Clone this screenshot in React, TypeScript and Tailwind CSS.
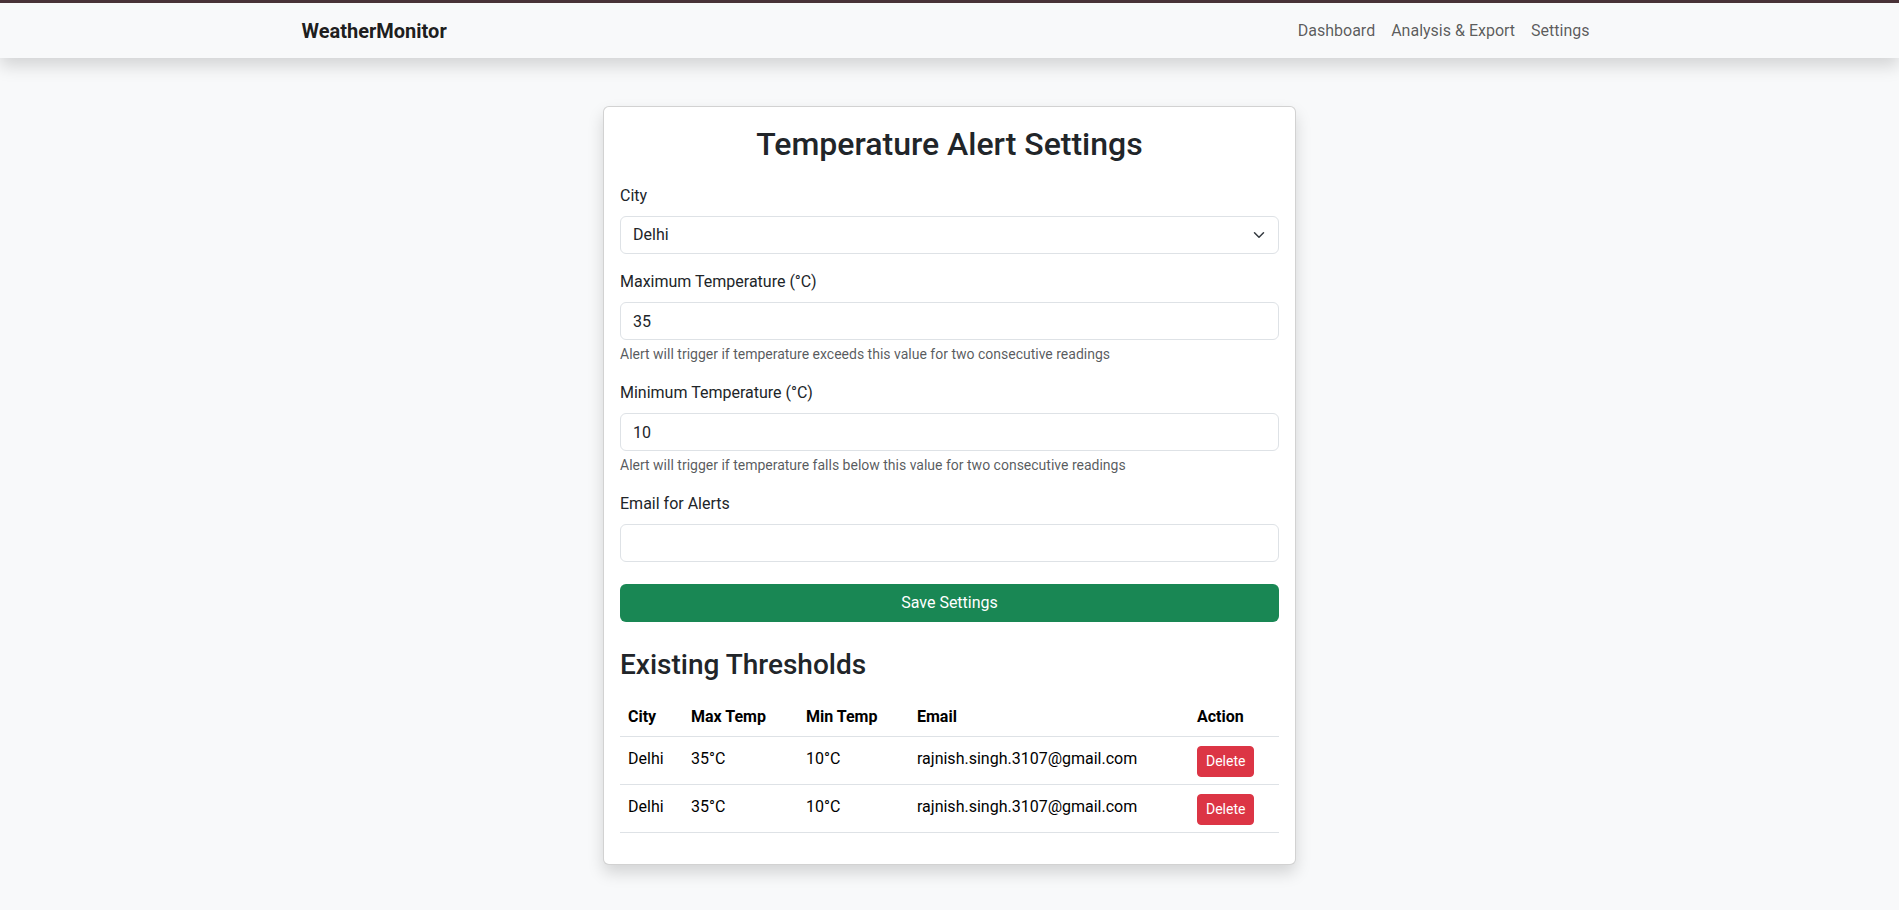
import { useState } from "react";

interface Threshold {
  id: number;
  city: string;
  maxTemp: number;
  minTemp: number;
  email: string;
}

const initialThresholds: Threshold[] = [
  { id: 1, city: "Delhi", maxTemp: 35, minTemp: 10, email: "rajnish.singh.3107@gmail.com" },
  { id: 2, city: "Delhi", maxTemp: 35, minTemp: 10, email: "rajnish.singh.3107@gmail.com" },
];

const cities = ["Delhi", "Mumbai", "Chennai", "Bangalore", "Kolkata", "Hyderabad"];

const App = () => {
  const [city, setCity] = useState("Delhi");
  const [maxTemp, setMaxTemp] = useState("35");
  const [minTemp, setMinTemp] = useState("10");
  const [email, setEmail] = useState("");
  const [thresholds, setThresholds] = useState<Threshold[]>(initialThresholds);

  const handleDelete = (id: number) => {
    setThresholds(thresholds.filter((t) => t.id !== id));
  };

  return (
    <div className="min-h-screen bg-[#f8f9fa] text-[#212529] font-['Segoe_UI',Roboto,'Liberation_Sans',sans-serif]">
      <div className="h-[3px] bg-[#4a3339]" />

      <nav className="bg-[#f8f9fa] shadow-[0_8px_16px_rgba(0,0,0,0.15)] relative">
        <div className="w-[1320px] mx-auto px-3 h-[55px] flex items-center justify-between">
          <span className="text-xl font-bold text-black/90">WeatherMonitor</span>
          <div className="flex items-center">
            <a className="px-2 text-base text-black/65">Dashboard</a>
            <a className="px-2 text-base text-black/65">Analysis &amp; Export</a>
            <a className="px-2 text-base text-black/65">Settings</a>
          </div>
        </div>
      </nav>

      <main className="pt-12 pb-10">
        <div className="w-[693px] mx-auto bg-white border border-black/[0.175] rounded-md shadow-[0_8px_16px_rgba(0,0,0,0.15)] px-4 pt-[18px] pb-[15px]">
          <h2 className="text-[32px] font-medium leading-[1.2] text-center mb-[21px]">
            Temperature Alert Settings
          </h2>

          <div className="mb-4">
            <label className="block text-base leading-6 mb-2">City</label>
            <div className="relative">
              <select
                value={city}
                onChange={(e) => setCity(e.target.value)}
                className="appearance-none w-full h-[38px] border border-[#dee2e6] rounded-md bg-white pl-3 pr-9 text-base outline-none"
              >
                {cities.map((c) => (
                  <option key={c}>{c}</option>
                ))}
              </select>
              <svg
                className="absolute right-3 top-[13px] pointer-events-none"
                width="16"
                height="12"
                viewBox="0 0 16 16"
                fill="none"
                stroke="#343a40"
                strokeWidth="2"
                strokeLinecap="round"
                strokeLinejoin="round"
              >
                <path d="m2 5 6 6 6-6" />
              </svg>
            </div>
          </div>

          <div className="mb-4">
            <label className="block text-base leading-6 mb-2">Maximum Temperature (°C)</label>
            <input
              type="number"
              value={maxTemp}
              onChange={(e) => setMaxTemp(e.target.value)}
              className="w-full h-[38px] border border-[#dee2e6] rounded-md px-3 text-base outline-none"
            />
            <p className="mt-1 text-sm leading-[1.5] text-[#212529]/75">
              Alert will trigger if temperature exceeds this value for two consecutive readings
            </p>
          </div>

          <div className="mb-4">
            <label className="block text-base leading-6 mb-2">Minimum Temperature (°C)</label>
            <input
              type="number"
              value={minTemp}
              onChange={(e) => setMinTemp(e.target.value)}
              className="w-full h-[38px] border border-[#dee2e6] rounded-md px-3 text-base outline-none"
            />
            <p className="mt-1 text-sm leading-[1.5] text-[#212529]/75">
              Alert will trigger if temperature falls below this value for two consecutive readings
            </p>
          </div>

          <div className="mb-[22px]">
            <label className="block text-base leading-6 mb-2">Email for Alerts</label>
            <input
              type="email"
              value={email}
              onChange={(e) => setEmail(e.target.value)}
              className="w-full h-[38px] border border-[#dee2e6] rounded-md px-3 text-base outline-none"
            />
          </div>

          <button className="w-full h-[38px] bg-[#198754] text-white text-base rounded-md">
            Save Settings
          </button>

          <h3 className="text-[28px] font-medium leading-[1.2] mt-[26px] mb-[14px]">Existing Thresholds</h3>

          <table className="w-full table-fixed text-black mb-4">
            <thead>
              <tr className="border-b border-[#dee2e6]">
                <th className="w-[63px] text-left font-bold px-2 pt-[9px] pb-[7px] leading-6">City</th>
                <th className="w-[115px] text-left font-bold px-2 pt-[9px] pb-[7px] leading-6">Max Temp</th>
                <th className="w-[111px] text-left font-bold px-2 pt-[9px] pb-[7px] leading-6">Min Temp</th>
                <th className="w-[280px] text-left font-bold px-2 pt-[9px] pb-[7px] leading-6">Email</th>
                <th className="text-left font-bold px-2 pt-[9px] pb-[7px] leading-6">Action</th>
              </tr>
            </thead>
            <tbody>
              {thresholds.map((t) => (
                <tr key={t.id} className="border-b border-[#dee2e6]">
                  <td className="px-2 pt-[10px] pb-2 leading-6 align-top">{t.city}</td>
                  <td className="px-2 pt-[10px] pb-2 leading-6 align-top">{t.maxTemp}°C</td>
                  <td className="px-2 pt-[10px] pb-2 leading-6 align-top">{t.minTemp}°C</td>
                  <td className="px-2 pt-[10px] pb-2 leading-6 align-top">{t.email}</td>
                  <td className="px-2 pt-[9px] pb-[7px] leading-6 align-top">
                    <button
                      onClick={() => handleDelete(t.id)}
                      className="bg-[#dc3545] border border-[#dc3545] text-white text-sm leading-[1.5] px-2 py-1 rounded"
                    >
                      Delete
                    </button>
                  </td>
                </tr>
              ))}
            </tbody>
          </table>
        </div>
      </main>
    </div>
  );
};

export default App;
